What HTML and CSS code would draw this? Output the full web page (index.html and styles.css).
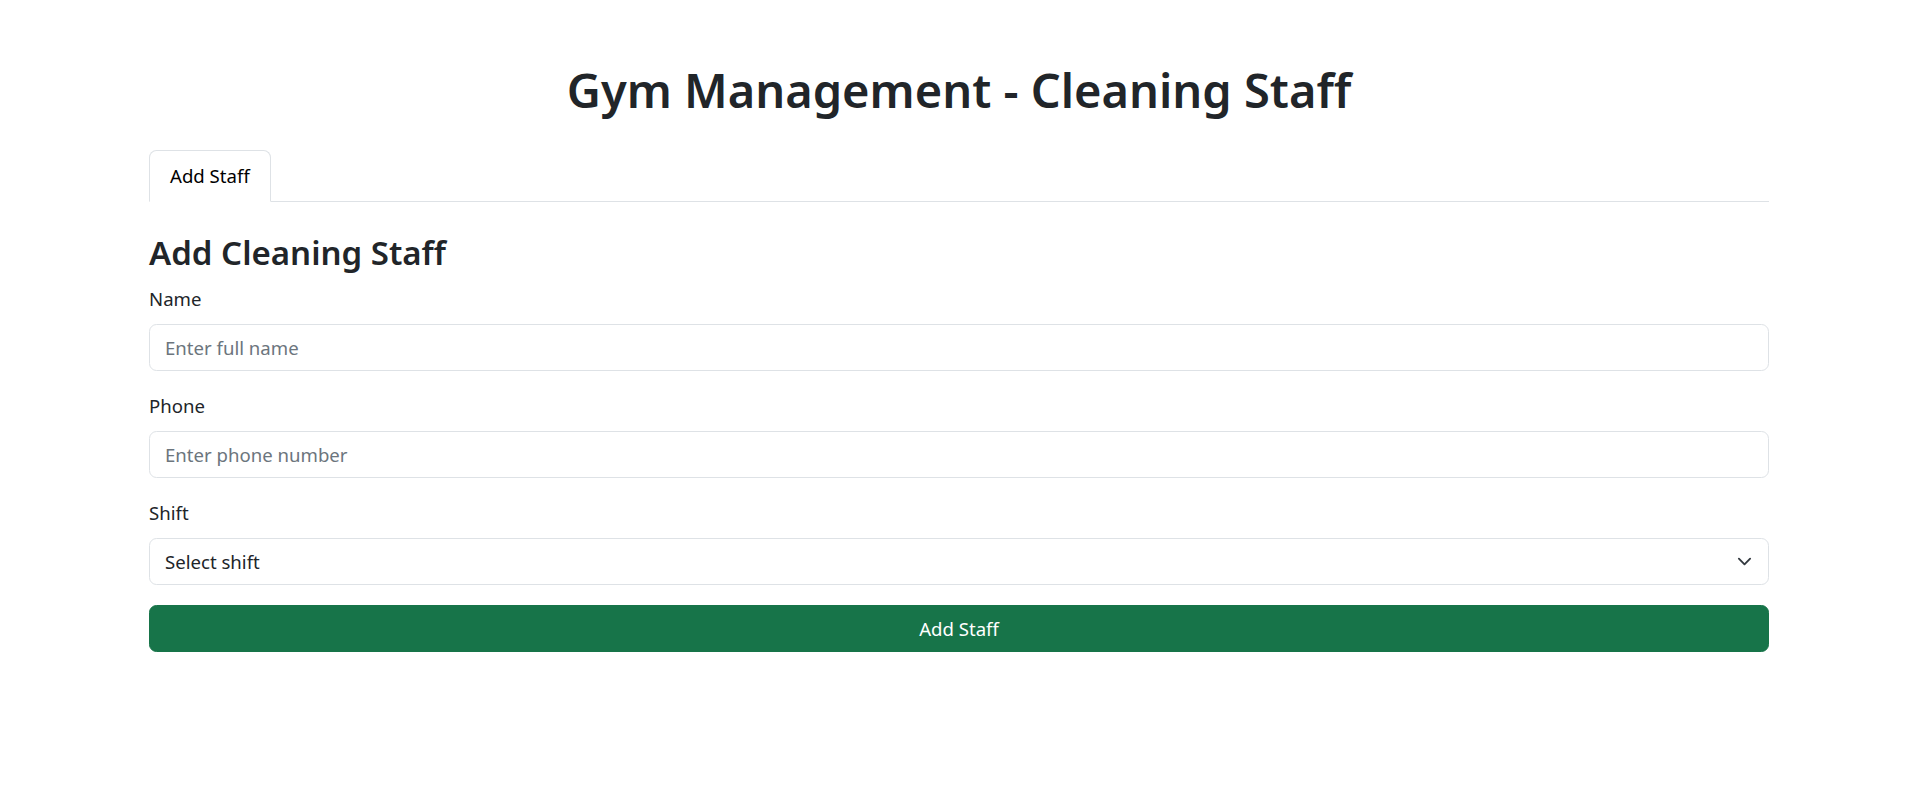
FILE: index.html
```html
<!DOCTYPE html>
<html lang="en">
<head>
<meta charset="utf-8">
<title>Gym Management - Cleaning Staff</title>
<link rel="stylesheet" href="styles.css">
</head>
<body>
<div class="container">
  <h1 class="title">Gym Management - Cleaning Staff</h1>
  <ul class="tabs">
    <li><a class="tab active" href="#">Add Staff</a></li>
  </ul>
  <div class="pane">
    <h3 class="pane-title">Add Cleaning Staff</h3>
    <form class="staff-form">
      <div class="field">
        <label class="label" for="name">Name</label>
        <input class="control" id="name" type="text" placeholder="Enter full name">
      </div>
      <div class="field">
        <label class="label" for="phone">Phone</label>
        <input class="control" id="phone" type="text" placeholder="Enter phone number">
      </div>
      <div class="field">
        <label class="label" for="shift">Shift</label>
        <div class="select-wrap">
          <select class="control select" id="shift">
            <option>Select shift</option>
            <option>Morning</option>
            <option>Evening</option>
            <option>Night</option>
          </select>
          <svg class="chevron" width="15" height="15" viewBox="0 0 16 16" aria-hidden="true"><path fill="none" stroke="#343a40" stroke-linecap="round" stroke-linejoin="round" stroke-width="2" d="m2 5 6 6 6-6"/></svg>
        </div>
      </div>
      <button class="submit" type="button">Add Staff</button>
    </form>
  </div>
</div>
</body>
</html>
```
FILE: styles.css
```css
html, body {
  margin: 0;
  padding: 0;
  background: #fff;
}
body {
  font-family: "Noto Sans", "Open Sans", sans-serif;
  font-size: 18.6px;
  line-height: 30px;
  color: #212529;
}
.container {
  max-width: 1620px;
  margin: 0 auto;
  padding-top: 60px;
}
.title {
  margin: 0 0 30px;
  font-size: 47px;
  line-height: 60px;
  font-weight: 600;
  text-align: center;
}
.tabs {
  display: flex;
  list-style: none;
  margin: 0;
  padding: 0;
  border-bottom: 1px solid #dee2e6;
}
.tab {
  display: block;
  margin-bottom: -1px;
  padding: 10px 20px;
  line-height: 30px;
  border: 1px solid #dee2e6;
  border-bottom-color: #fff;
  border-radius: 7.5px 7.5px 0 0;
  background: #fff;
  color: #000;
  text-decoration: none;
}
.pane {
  padding-top: 30px;
}
.pane-title {
  margin: 0 0 10px;
  font-size: 33px;
  line-height: 42px;
  font-weight: 600;
}
.field {
  margin-bottom: 20px;
}
.label {
  display: block;
  margin-bottom: 10px;
  line-height: 30px;
}
.control {
  display: block;
  width: 100%;
  box-sizing: border-box;
  height: 47px;
  padding: 7.5px 15px;
  font: inherit;
  line-height: 30px;
  color: #212529;
  background: #fff;
  border: 1px solid #dee2e6;
  border-radius: 7.5px;
  outline: none;
}
.control::placeholder {
  color: #6c757d;
  opacity: 1;
}
.select-wrap {
  position: relative;
}
.select {
  appearance: none;
  -webkit-appearance: none;
  padding-right: 45px;
}
.chevron {
  position: absolute;
  right: 17.5px;
  top: 50%;
  margin-top: -7.5px;
  pointer-events: none;
}
.submit {
  display: block;
  width: 100%;
  box-sizing: border-box;
  height: 47px;
  padding: 7.5px 15px;
  font: inherit;
  line-height: 30px;
  color: #fff;
  background: #177449;
  border: 1px solid #177449;
  border-radius: 7.5px;
  cursor: pointer;
}
```
